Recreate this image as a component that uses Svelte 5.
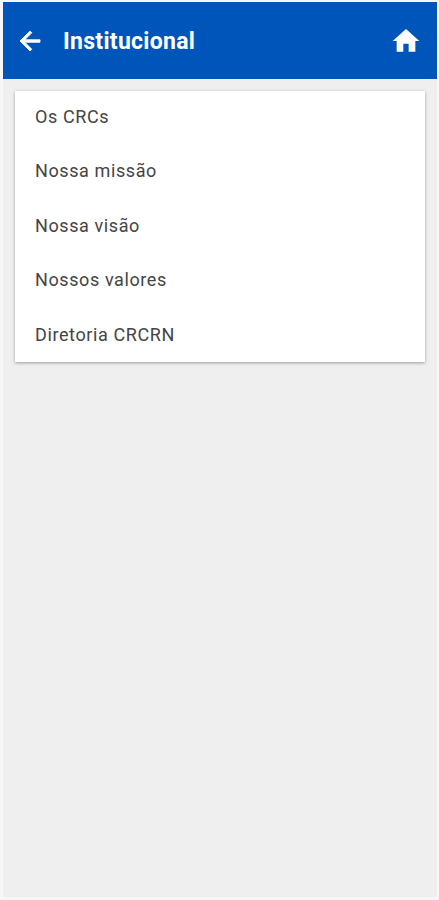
<script>
    const items = ['Os CRCs', 'Nossa missão', 'Nossa visão', 'Nossos valores', 'Diretoria CRCRN'];
</script>

<div class="page">
    <header class="toolbar">
        <svg class="back" viewBox="0 0 24 24" width="30" height="30" aria-hidden="true">
            <path d="M20 11H7.83l5.59-5.59L12 4l-8 8 8 8 1.41-1.41L7.83 13H20v-2z" />
        </svg>
        <h1>Institucional</h1>
        <svg class="home" viewBox="0 0 24 24" width="32" height="32" aria-hidden="true">
            <path d="M10 20v-6h4v6h5v-8h3L12 3 2 12h3v8z" />
        </svg>
    </header>
    <main>
        <ul class="card">
            {#each items as item}
                <li>{item}</li>
            {/each}
        </ul>
    </main>
</div>

<style>
    :global(body) {
        background: #f7f7f7;
    }

    .page {
        box-sizing: border-box;
        height: 900px;
        padding: 2px 2px 3px 3px;
        display: flex;
        flex-direction: column;
        font-family: Roboto, sans-serif;
    }

    .toolbar {
        height: 77px;
        flex: none;
        display: flex;
        align-items: center;
        background: #0055bb;
        color: #fff;
        padding: 0 15px 0 12px;
    }

    .toolbar svg {
        fill: #fff;
        flex: none;
    }

    .back {
        stroke: #fff;
        stroke-width: 0.7;
    }

    h1 {
        flex: 1;
        margin: 1px 0 0 18px;
        font-size: 23px;
        font-weight: 700;
        letter-spacing: 0.3px;
    }

    main {
        flex: 1;
        background: #efefef;
        padding: 12px 12px 0;
    }

    .card {
        list-style: none;
        margin: 0;
        padding: 0;
        background: #fff;
        box-shadow: 0 1px 3px rgba(0, 0, 0, 0.35);
    }

    li {
        height: 54.4px;
        line-height: 52px;
        padding-left: 20px;
        font-size: 18px;
        letter-spacing: 0.6px;
        color: #444;
    }

    li:last-child {
        height: 53px;
    }
</style>
